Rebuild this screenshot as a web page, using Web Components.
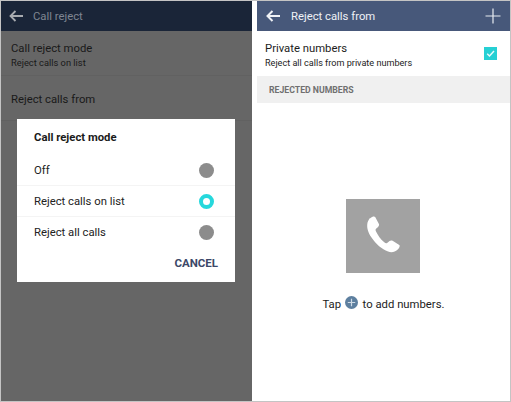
<!DOCTYPE html>
<html><head><meta charset="utf-8"><style>
html,body{margin:0;padding:0;background:#fff}
body{width:511px;height:402px;overflow:hidden;font-family:Roboto,"Liberation Sans",sans-serif}
</style></head><body>
<phone-shots>
<reject-mode-screen slot="left"></reject-mode-screen>
<reject-from-screen slot="right"></reject-from-screen>
</phone-shots>
<script>
const def=(name,html)=>customElements.define(name,class extends HTMLElement{constructor(){super();this.attachShadow({mode:'open'}).innerHTML=html}});
def('phone-shots',`<style>:host{display:grid;grid-template-columns:251px 253px;column-gap:5px;width:511px;height:402px;box-sizing:border-box;border:1px solid #c4c4c4;background:#fff}
::slotted(*){height:400px}</style><slot name="left"></slot><slot name="right"></slot>`);
def('app-bar',`<style>:host{display:flex;align-items:center;height:30px;box-sizing:border-box;background:var(--bar);color:var(--fg);font-size:11.300px;padding-left:var(--pad,8px)}
svg{width:14px;height:12px;margin-right:var(--gap,10px);flex:none;color:var(--arrow,currentColor)}
.t{flex:1}</style>
<svg viewBox="0 0 14 12" fill="none" stroke="currentColor" stroke-width="var(--sw,1.800)"><path d="M14 6H1.500M6.500 1 1.500 6l5 5"/></svg><span class="t"><slot></slot></span><slot name="end"></slot>`);
def('radio-row',`<style>:host{display:flex;align-items:center;justify-content:space-between;height:31px;box-sizing:border-box;padding:0 21px 0 17px;font-size:11.300px;color:#222;border-top:1px solid var(--line,transparent)}
i{width:15px;height:15px;border-radius:50%;background:#8c8c8c;box-sizing:border-box}
:host([on]) i{background:#fff;border:4.500px solid #26d8dc}</style><span><slot></slot></span><i></i>`);
def('mode-dialog',`<style>:host{position:absolute;left:16px;top:118px;width:218px;height:163px;background:#fff;box-sizing:border-box;display:block;color:#1a1a1a}
.h{font:bold 11.300px/14px Roboto,sans-serif;padding:12px 17px 0;height:35px;box-sizing:border-box}
.c{font:bold 11.500px/14px Roboto,sans-serif;color:#3c4868;text-align:right;padding:9px 17px 0 0}
</style><div class="h">Call reject mode</div>
<radio-row>Off</radio-row><radio-row on style="--line:#f4f4f4">Reject calls on list</radio-row><radio-row style="--line:#f4f4f4">Reject all calls</radio-row>
<div class="c">CANCEL</div>`);
def('reject-mode-screen',`<style>:host{display:block;position:relative;background:#666;overflow:hidden;--bar:#1a2538;--fg:#7f8692;--arrow:#a8abb0}
.r{padding:0 10px;color:#191919;border-bottom:1px solid #616161;box-sizing:border-box}
.a{height:45px;padding-top:10px;font-size:11.300px;line-height:15px}
.a small{display:block;font-size:9.300px;line-height:12px;margin-top:1px}
.b{height:45px;padding-top:2px;font-size:11.300px;display:flex;align-items:center}
</style><app-bar>Call reject</app-bar>
<div class="r a">Call reject mode<small>Reject calls on list</small></div>
<div class="r b">Reject calls from</div>
<mode-dialog></mode-dialog>`);
def('reject-from-screen',`<style>:host{display:flex;flex-direction:column;background:#fff;--bar:#47587a;--fg:#f0f2f6;--pad:9px;--gap:11px;--sw:2;color:#1c1c1c}
.p{height:45px;box-sizing:border-box;padding:10px 13px 0 8px;display:flex;justify-content:space-between;font-size:11.300px;line-height:15px}
.p small{display:block;font-size:9.100px;line-height:12px;margin-top:1px}
.chk{width:13px;height:13px;background:#26d0d4;margin-top:6px;display:block}
.s{height:27px;background:#f0f0f0;color:#707070;font:bold 8.700px/28px Roboto,sans-serif;padding-left:12px}
.e{flex:1;display:flex;flex-direction:column;align-items:center;padding-top:96px}
.ph{width:74px;height:74px;background:#a2a2a2;display:block;margin-right:1px}
.t{margin-top:23px;font-size:11.300px;display:flex;align-items:center;height:17px}
.plus{width:13px;height:13px;margin:0 4.500px 0 4px;position:relative;top:-2px}
</style>
<app-bar>Reject calls from<svg slot="end" width="16" height="16" viewBox="0 0 16 16" stroke="#e8ebf0" stroke-width="1.200" fill="none" style="margin-right:9px;width:16px;height:16px"><path d="M8 .500v15M.500 8h15"/></svg></app-bar>
<div class="p"><div>Private numbers<small>Reject all calls from private numbers</small></div>
<svg class="chk" viewBox="0 0 13 13"><path d="M3.200 6.800 5.500 9l4.500-5" fill="none" stroke="#e8fbfb" stroke-width="1.500"/></svg></div>
<div class="s">REJECTED NUMBERS</div>
<div class="e"><svg class="ph" viewBox="0 0 74 74"><path transform="translate(-1.500 -.300) scale(1.030)" fill="#fff" d="M25 19c1.800-1.700 4-2.200 4.800-1.200l3.500 6.600c.6 1.200.3 2-.7 3l-2 1.800c-.6.700-.5 1.500 0 2.600 1.800 3.600 4.300 7.400 8.300 10.800.9.800 1.700.9 2.500.3l2.300-1.800c1-.7 1.900-.8 3-.2l6.500 4.100c1 .8.100 3-1.800 4.600-2.300 2-5.600 3-9.100 1.700-6-2.200-11.800-7.300-15.900-13.400-4-5.800-4.600-10-4.300-13.200.2-2 1.100-3.800 2.400-5.700z"/></svg>
<div class="t"><span>Tap</span><svg class="plus" viewBox="0 0 14 14"><circle cx="7" cy="7" r="7" fill="#5d7f9f"/><path d="M7 3v8M3 7h8" stroke="#cfdbe6" stroke-width="1.300"/></svg><span>to add numbers.</span></div></div>`);
</script></body></html>
